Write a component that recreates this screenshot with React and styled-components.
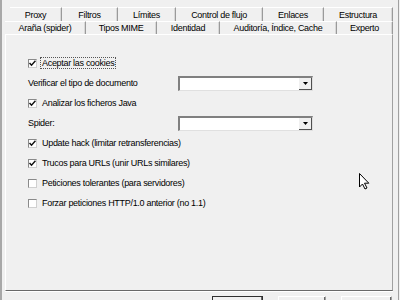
import React from "react";
import styled, { createGlobalStyle } from "styled-components";

const GlobalStyle = createGlobalStyle`
  html, body {
    margin: 0;
    padding: 0;
    background: #f0f0f0;
    overflow: hidden;
  }
  body {
    font-family: "Liberation Sans", Arial, sans-serif;
    font-size: 9px;
    letter-spacing: -0.3px;
    color: #000;
  }
`;

const Window = styled.div`
  position: relative;
  width: 399px;
  height: 300px;
  box-sizing: border-box;
  background: #f0f0f0;
  border-left: 2px solid #a8a8a8;
  border-right: 1px solid #a0a0a0;
  padding: 7px 0 0 3px;
  display: flex;
  flex-direction: column;
  overflow: hidden;
  & > * {
    flex-shrink: 0;
  }
`;

const TabRow = styled.div`
  display: flex;
  height: ${({ h }) => h}px;
  padding-left: ${({ indent }) => indent}px;
`;

const Tab = styled.div`
  width: ${({ w }) => w}px;
  box-sizing: border-box;
  display: flex;
  align-items: center;
  justify-content: center;
  border-top: 1px solid #ffffff;
  border-right: 1px solid #9a9a9a;
  box-shadow: inset -1px 0 0 #d8d8d8;
  padding-top: ${({ top }) => top || 0}px;
  white-space: nowrap;
`;

const Panel = styled.div`
  width: 388px;
  height: 257px;
  box-sizing: border-box;
  border-top: 1px solid #ffffff;
  border-left: 1px solid #ffffff;
  border-right: 1px solid #a0a0a0;
  border-bottom: 1px solid #696969;
  box-shadow: 0 1px 0 #ffffff;
  padding: 18px 0 0 22px;
  display: flex;
  flex-direction: column;
`;

const Row = styled.div`
  height: 20px;
  display: grid;
  grid-template-columns: ${({ select }) => (select ? "150px 135px" : "auto")};
  align-items: center;
`;

const CheckLine = styled.label`
  display: flex;
  align-items: center;
  gap: 4px;
`;

const Box = styled.span`
  width: 9px;
  height: 9px;
  box-sizing: border-box;
  background: #ffffff;
  border: 1px solid #8a8a8a;
  border-right-color: #d0d0d0;
  border-bottom-color: #d0d0d0;
  display: flex;
  align-items: center;
  justify-content: center;
`;

const Caption = styled.span`
  white-space: nowrap;
  padding: 0 1px;
  outline: ${({ focus }) => (focus ? "1px dotted #555" : "none")};
`;

const Label = styled.span`
  white-space: nowrap;
`;

const Select = styled.div`
  height: 15px;
  box-sizing: border-box;
  background: #ffffff;
  border-top: 2px solid #808080;
  border-left: 2px solid #808080;
  border-right: 1px solid #e0e0e0;
  border-bottom: 1px solid #e0e0e0;
  display: flex;
  justify-content: flex-end;
  align-items: stretch;
`;

const DropBtn = styled.span`
  width: 12px;
  background: #f0f0f0;
  border-right: 1px solid #505050;
  border-bottom: 1px solid #505050;
  display: flex;
  align-items: center;
  justify-content: center;
`;

const ButtonBar = styled.div`
  display: flex;
  padding: 5px 0 0 207px;
  gap: 15px;
`;

/* only the top few pixels of the dialog buttons are in view */
const Button = styled.div`
  width: ${({ w }) => w}px;
  height: 4px;
  box-sizing: border-box;
  border: 1px solid ${({ primary }) => (primary ? "#303030" : "#a0a0a0")};
  border-bottom: none;
  border-top-color: ${({ primary }) => (primary ? "#303030" : "#ffffff")};
  border-left-color: ${({ primary }) => (primary ? "#303030" : "#ffffff")};
  box-shadow: inset -1px 0 0 #696969;
`;

const Cursor = styled.svg`
  position: absolute;
  left: 357px;
  top: 173px;
`;

const Check = () => (
  <svg width="7" height="7" viewBox="0 0 7 7">
    <path d="M0.5 3 L2.5 5.2 L6.5 0.8" fill="none" stroke="#111" strokeWidth="1.5" />
  </svg>
);

const CheckItem = ({ checked, focus, children }) => (
  <Row>
    <CheckLine>
      <Box>{checked && <Check />}</Box>
      <Caption focus={focus}>{children}</Caption>
    </CheckLine>
  </Row>
);

const Combo = () => (
  <Select>
    <DropBtn>
      <svg width="5" height="3" viewBox="0 0 5 3">
        <path d="M0 0 H5 L2.5 3 Z" fill="#000" />
      </svg>
    </DropBtn>
  </Select>
);

const backTabs = [
  ["Proxy", 52],
  ["Filtros", 56],
  ["Límites", 58],
  ["Control de flujo", 87],
  ["Enlaces", 61],
  ["Estructura", 69],
];

const frontTabs = [
  ["Araña (spider)", 81],
  ["Tipos MIME", 71],
  ["Identidad", 63],
  ["Auditoría, Índice, Cache", 117],
  ["Experto", 56],
];

export default function App() {
  return (
    <>
      <GlobalStyle />
      <Window>
        <TabRow h={14} indent={5}>
          {backTabs.map(([t, w]) => (
            <Tab key={t} w={w} top={1}>
              {t}
            </Tab>
          ))}
        </TabRow>
        <TabRow h={13} indent={0}>
          {frontTabs.map(([t, w]) => (
            <Tab key={t} w={w}>
              {t}
            </Tab>
          ))}
        </TabRow>
        <Panel>
          <CheckItem checked focus>
            Aceptar las cookies
          </CheckItem>
          <Row select>
            <Label>Verificar el tipo de documento</Label>
            <Combo />
          </Row>
          <CheckItem checked>Analizar los ficheros Java</CheckItem>
          <Row select>
            <Label>Spider:</Label>
            <Combo />
          </Row>
          <CheckItem checked>Update hack (limitar retransferencias)</CheckItem>
          <CheckItem checked>Trucos para URLs (unir URLs similares)</CheckItem>
          <CheckItem>Peticiones tolerantes (para servidores)</CheckItem>
          <CheckItem>Forzar peticiones HTTP/1.0 anterior (no 1.1)</CheckItem>
        </Panel>
        <ButtonBar>
          <Button w={51} primary />
          <Button w={48} />
          <Button w={51} />
        </ButtonBar>
        <Cursor width="11" height="17" viewBox="0 0 11 17">
          <path
            d="M0.5 0.5 V14 L3.5 11 L6 16 L8 15 L5.5 10.2 H9.8 Z"
            fill="#ffffff"
            stroke="#000"
            strokeWidth="1"
            strokeLinejoin="round"
          />
        </Cursor>
      </Window>
    </>
  );
}
